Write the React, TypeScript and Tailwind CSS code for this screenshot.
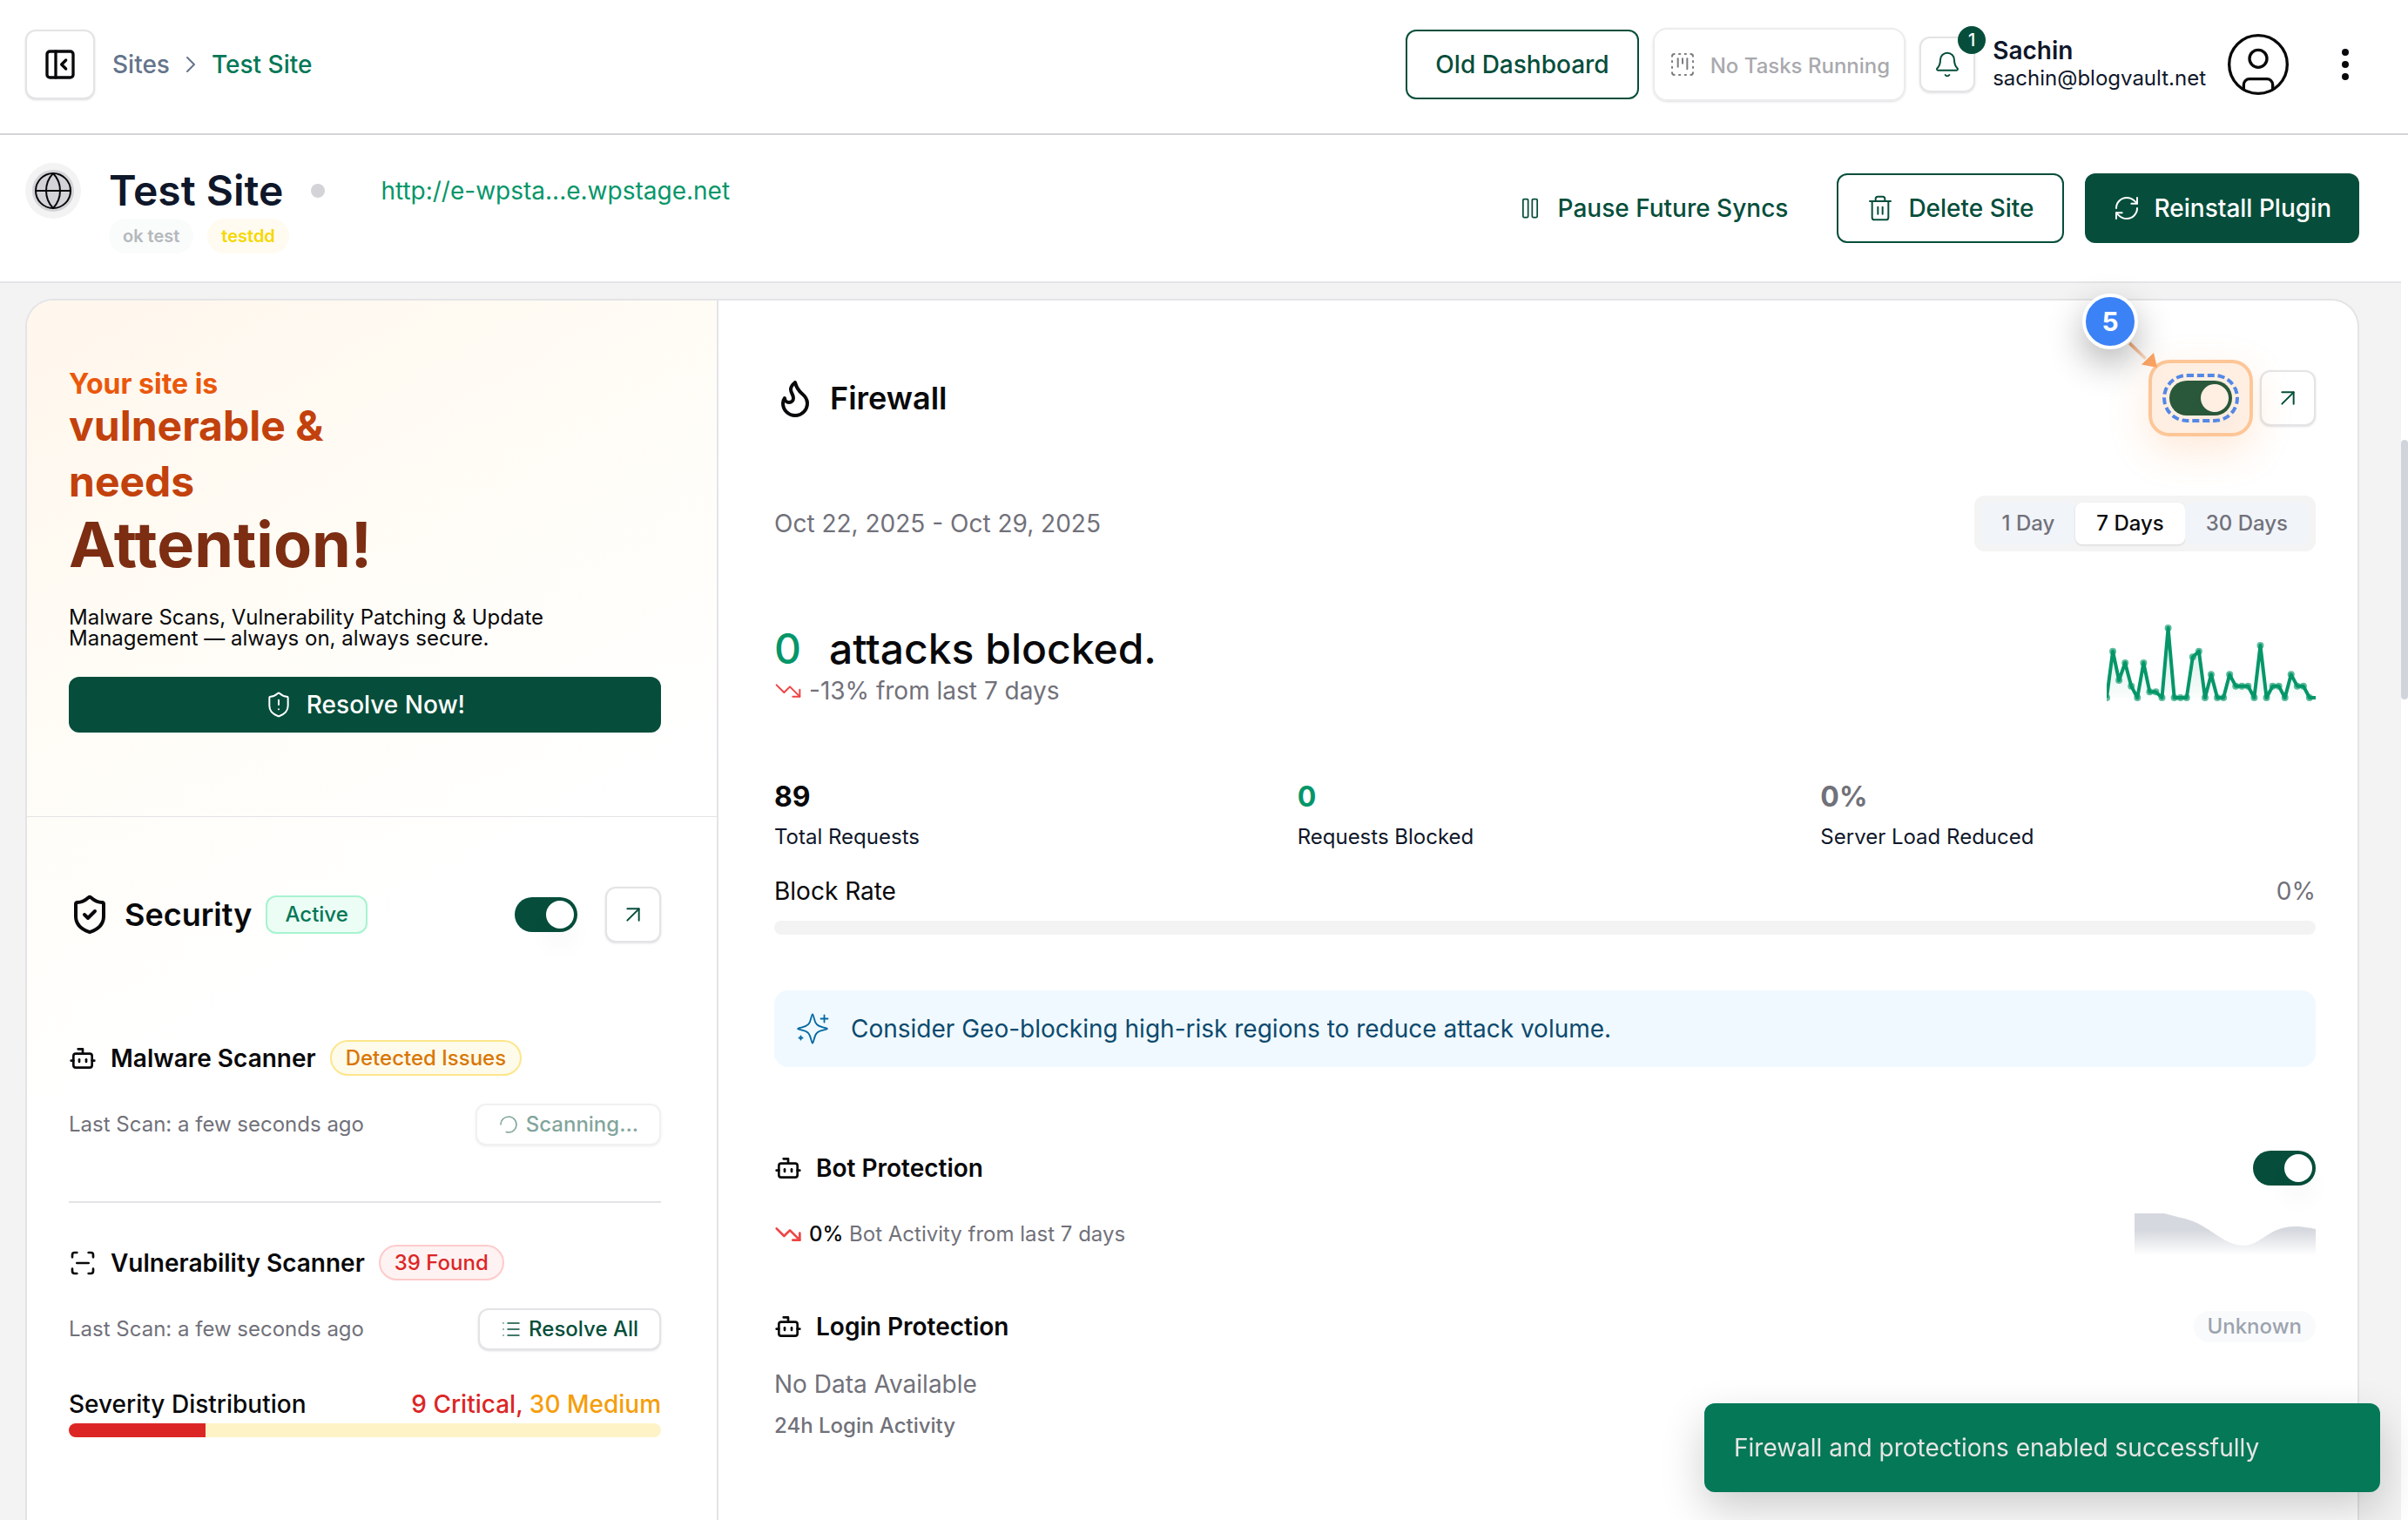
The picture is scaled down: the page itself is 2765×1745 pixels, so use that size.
import React, { useState } from 'react';
import {
  ArrowUpRight,
  Bell,
  Bot,
  ChevronRight,
  CircleUser,
  EllipsisVertical,
  Flame,
  Globe,
  List,
  LoaderCircle,
  PanelLeftClose,
  Pause,
  RefreshCw,
  ScanLine,
  ShieldAlert,
  ShieldCheck,
  SquareDashedKanban,
  Trash2,
  TrendingDown,
} from 'lucide-react';
import clsx from 'clsx';

const ATTACKS = [
  0, 8, 3, 6, 2, 0, 6, 1, 1, 0, 12, 0, 0, 0, 7, 8, 0, 4, 0, 0, 4, 2, 2, 2, 0, 9, 0, 2, 2, 0, 4, 2, 2, 0, 0,
];

const RANGES = ['1 Day', '7 Days', '30 Days'];

const STATS = [
  { value: '89', label: 'Total Requests', color: 'text-zinc-950' },
  { value: '0', label: 'Requests Blocked', color: 'text-[#059669]' },
  { value: '0%', label: 'Server Load Reduced', color: 'text-[#71717a]' },
];

interface SwitchProps {
  label: string;
}

const Switch: React.FC<SwitchProps> = ({ label }) => {
  const [on, setOn] = useState(true);

  return (
    <button
      type="button"
      role="switch"
      aria-checked={on}
      aria-label={label}
      onClick={() => setOn(!on)}
      className={clsx('flex h-10 w-[72px] shrink-0 rounded-full p-1', on ? 'justify-end bg-[#064e3b]' : 'justify-start bg-zinc-300')}
    >
      <span className="h-8 w-8 rounded-full bg-white shadow-[0_20px_30px_-6px_rgba(0,0,0,0.1)]" />
    </button>
  );
};

const OpenButton: React.FC<{ label: string }> = ({ label }) => (
  <button
    type="button"
    aria-label={label}
    className="flex h-16 w-16 shrink-0 items-center justify-center rounded-xl border-2 border-[#e4e4e7] bg-white text-[#064e3b] shadow-sm"
  >
    <ArrowUpRight size={32} strokeWidth={1.5} />
  </button>
);

interface PillProps {
  className: string;
  children: React.ReactNode;
}

const Pill: React.FC<PillProps> = ({ className, children }) => (
  <span className={clsx('flex items-center rounded-full px-4 text-2xl leading-8 font-medium whitespace-nowrap', className)}>
    {children}
  </span>
);

const TopBar = () => (
  <header className="flex h-[155px] shrink-0 items-center justify-between border-b-2 border-[#d4d4d8] pr-8 pb-[5px] pl-[29px]">
    <div className="flex items-center">
      <button
        type="button"
        aria-label="Collapse sidebar"
        className="flex h-20 w-20 items-center justify-center rounded-xl border-2 border-[#e4e4e7] bg-white text-zinc-950 shadow-sm"
      >
        <PanelLeftClose size={40} />
      </button>
      <nav aria-label="Breadcrumb" className="ml-5 flex items-center gap-2 font-medium">
        <a href="#sites" className="text-[#64748b]">
          Sites
        </a>
        <ChevronRight size={32} strokeWidth={1.5} className="text-[#64748b]" />
        <a href="#test-site" className="text-[#047857]">
          Test Site
        </a>
      </nav>
    </div>

    <div className="flex items-center gap-4">
      <button type="button" className="h-20 rounded-xl border-2 border-[#064e3b] px-8 font-medium text-[#064e3b]">
        Old Dashboard
      </button>
      <button
        type="button"
        disabled
        className="flex h-[84px] items-center gap-4 rounded-2xl border-2 border-[#ececee] px-4 text-2xl font-medium text-[#a9a9ae] shadow-sm"
      >
        <SquareDashedKanban size={32} strokeWidth={1.5} className="text-[#7c7c80]" />
        <span className="pt-1">No Tasks Running</span>
      </button>
      <button
        type="button"
        aria-label="Notifications"
        className="relative flex h-16 w-16 items-center justify-center rounded-xl border-2 border-[#e4e4e7] text-[#064e3b] shadow-sm"
      >
        <Bell size={32} strokeWidth={1.5} />
        <span className="absolute -top-[14px] -right-[14px] flex h-8 w-8 items-center justify-center rounded-full bg-[#064e3b] text-xl font-medium text-white">
          1
        </span>
      </button>
      <div className="ml-1 flex flex-col leading-8 text-[#0f172a]">
        <span className="font-semibold">Sachin</span>
        <span className="text-2xl">sachin@blogvault.net</span>
      </div>
      <CircleUser size={80} strokeWidth={1} className="ml-1 text-zinc-950" />
      <button type="button" aria-label="More" className="ml-1 flex h-20 w-20 items-center justify-center text-zinc-950">
        <EllipsisVertical size={48} />
      </button>
    </div>
  </header>
);

const SiteBar = () => (
  <section className="flex h-[170px] shrink-0 items-center justify-between border-b-2 border-[#e4e4e7] bg-white pr-12 pl-[29px]">
    <div className="flex items-start">
      <div className="flex h-16 w-16 items-center justify-center rounded-full bg-[#f3f3f3]">
        <span className="flex h-12 w-12 items-center justify-center rounded-full bg-[#d4d4d8]">
          <Globe size={48} strokeWidth={1} className="text-zinc-950" />
        </span>
      </div>
      <div className="ml-8 flex flex-col">
        <div className="flex h-16 items-center">
          <h1 className="text-5xl font-semibold text-[#0f172a]">Test Site</h1>
          <span className="ml-8 h-4 w-4 rounded-full bg-[#d4d4d8]" />
          <a href="#open-site" className="ml-16 text-[#059669]">
            http://e-wpsta...e.wpstage.net
          </a>
        </div>
        <div className="flex gap-4 text-xl font-semibold">
          <span className="flex h-10 items-center rounded-full bg-[#fafbfb] px-4 text-[#b4b8bc]">ok test</span>
          <span className="flex h-10 items-center rounded-full bg-[#fffbf1] px-4 text-[#f5d800]">testdd</span>
        </div>
      </div>
    </div>

    <div className="flex items-center gap-6 font-medium">
      <button type="button" className="flex h-20 items-center gap-[18px] px-8 text-[#064e3b]">
        <Pause size={28} strokeWidth={1.5} />
        Pause Future Syncs
      </button>
      <button type="button" className="flex h-20 items-center gap-4 rounded-xl border-2 border-[#064e3b] px-8 text-[#064e3b]">
        <Trash2 size={32} strokeWidth={1.5} />
        Delete Site
      </button>
      <button type="button" className="flex h-20 items-center gap-4 rounded-xl bg-[#064e3b] px-8 text-white">
        <RefreshCw size={32} strokeWidth={1.5} />
        Reinstall Plugin
      </button>
    </div>
  </section>
);

const AttentionPanel = () => (
  <section className="border-b border-[#e4e4e7] pt-20 pr-16 pb-24 pl-12">
    <h2 className="flex flex-col font-bold">
      <span className="text-[32px] leading-8 text-[#ea580c]">Your site is</span>
      <span className="w-[340px] text-5xl leading-[64px] text-[#c2410c]">vulnerable &amp; needs</span>
      <span className="text-7xl leading-[80px] text-[#7c2d12]">Attention!</span>
    </h2>
    <p className="mt-8 w-[560px] text-2xl leading-6 text-zinc-950">
      Malware Scans, Vulnerability Patching &amp; Update Management — always on, always secure.
    </p>
    <button
      type="button"
      className="mt-8 flex h-16 w-full items-center justify-center gap-4 rounded-xl bg-[#064e3b] font-medium text-white"
    >
      <ShieldAlert size={32} strokeWidth={1.5} />
      Resolve Now!
    </button>
  </section>
);

const SecurityPanel = () => (
  <section className="flex flex-col pt-20 pr-16 pl-12">
    <div className="flex items-center justify-between">
      <div className="flex items-center gap-4">
        <ShieldCheck size={48} />
        <h2 className="text-4xl font-semibold">Security</h2>
        <span className="flex h-11 items-center rounded-xl border-2 border-[#a7f3d0] bg-[#ecfdf5] px-5 text-2xl font-medium text-[#047857]">
          Active
        </span>
      </div>
      <div className="flex items-center gap-8">
        <Switch label="Security" />
        <OpenButton label="Open security" />
      </div>
    </div>

    <div className="mt-28 flex items-center gap-4">
      <Bot size={32} />
      <h3 className="font-semibold">Malware Scanner</h3>
      <Pill className="h-[41px] border-2 border-[#fde68a] bg-[#fffbeb] text-[#d97706]">Detected Issues</Pill>
    </div>
    <div className="mt-8 flex items-center justify-between text-2xl">
      <span className="text-[#71717a]">Last Scan: a few seconds ago</span>
      <button
        type="button"
        disabled
        className="flex h-12 items-center gap-2 rounded-xl border-2 border-[#e4e4e7] bg-white px-6 font-medium text-[#064e3b] opacity-50 shadow-sm"
      >
        <LoaderCircle size={24} strokeWidth={1.5} className="rotate-180" />
        Scanning...
      </button>
    </div>

    <hr className="mt-16 border-t-2 border-[#e4e4e7]" />

    <div className="mt-12 flex items-center gap-4">
      <ScanLine size={32} />
      <h3 className="font-semibold">Vulnerability Scanner</h3>
      <Pill className="h-[41px] border-2 border-[#fecaca] bg-[#fef2f2] text-[#dc2626]">39 Found</Pill>
    </div>
    <div className="mt-8 flex items-center justify-between text-2xl">
      <span className="text-[#71717a]">Last Scan: a few seconds ago</span>
      <button
        type="button"
        className="flex h-12 items-center gap-2 rounded-xl border-2 border-[#e4e4e7] bg-white px-6 font-medium text-[#064e3b] shadow-sm"
      >
        <List size={24} strokeWidth={1.5} />
        Resolve All
      </button>
    </div>

    <div className="mt-10 flex items-center justify-between leading-[44px] font-medium">
      <span>Severity Distribution</span>
      <span className="text-[#f59e0b]">
        <span className="text-[#dc2626]">9 Critical,</span> 30 Medium
      </span>
    </div>
    <div className="h-4 overflow-hidden rounded-full bg-[#fef3c7]">
      <div className="h-full bg-[#dc2626]" style={{ width: `${(9 / 39) * 100}%` }} />
    </div>
  </section>
);

const AttackChart = () => {
  const points = ATTACKS.map((value, i) => ({ x: (i * 240) / (ATTACKS.length - 1), y: 88 - (value * 20) / 3 }));
  const line = points.map((p) => `${p.x},${p.y}`).join(' ');

  return (
    <svg width="240" height="96" viewBox="0 0 240 96" aria-hidden="true">
      <defs>
        <linearGradient id="attack-fill" x1="0" y1="0" x2="0" y2="1">
          <stop offset="0" stopColor="#059669" stopOpacity="0.2" />
          <stop offset="1" stopColor="#059669" stopOpacity="0.02" />
        </linearGradient>
      </defs>
      <polygon points={`0,88 ${line} 240,88`} fill="url(#attack-fill)" />
      <polyline points={line} fill="none" stroke="#059669" strokeWidth="4" strokeLinejoin="round" />
      {points.slice(0, -1).map((p) => (
        <circle key={p.x} cx={p.x} cy={p.y} r="4" fill="#059669" fillOpacity="0.65" />
      ))}
    </svg>
  );
};

const BotChart = () => (
  <svg width="208" height="48" viewBox="0 0 208 48" aria-hidden="true">
    <defs>
      <linearGradient id="bot-fill" x1="0" y1="0" x2="0" y2="1">
        <stop offset="0.4" stopColor="#d5d8de" />
        <stop offset="1" stopColor="#d5d8de" stopOpacity="0" />
      </linearGradient>
    </defs>
    <path
      d="M0 0H34C44 3 56 5 67 9C88 17 104 37 125 37C145 37 154 15 184 15C194 15 202 17 208 18V48H0Z"
      fill="url(#bot-fill)"
    />
  </svg>
);

// Numbered walkthrough marker that sits on top of the firewall switch
const StepMarker = () => (
  <div className="pointer-events-none absolute -inset-6">
    <div className="absolute inset-0 rounded-3xl border-4 border-[#fb923c]/45 bg-[#fb923c]/15 shadow-[0_16px_48px_rgba(251,146,60,0.2)]" />
    <div className="absolute inset-4 rounded-full border-4 border-dashed border-[#5487e6]" />
    <svg width="40" height="40" viewBox="0 0 40 40" className="absolute -top-6 -left-7">
      <defs>
        <linearGradient id="arrow-line" x1="0" y1="0" x2="1" y2="1">
          <stop offset="0" stopColor="#f0a46c" />
          <stop offset="1" stopColor="#fbe0cc" />
        </linearGradient>
      </defs>
      <path d="M7.500 3.500L26 21.500L23.500 24L5 6.500Z" fill="url(#arrow-line)" />
      <path d="M34 16L38 33L20 29.500Z" fill="#fba564" />
    </svg>
    <div className="absolute -top-[76px] -left-[76px] flex h-16 w-16 items-center justify-center rounded-full border-4 border-white bg-[#3b82f6] text-3xl font-bold text-white shadow-[0_16px_40px_rgba(0,0,0,0.3)]">
      5
    </div>
  </div>
);

const SparkleIcon = () => (
  <svg
    width="40"
    height="40"
    viewBox="0 0 40 40"
    fill="none"
    stroke="#0369a1"
    strokeWidth="1.8"
    strokeLinecap="round"
    strokeLinejoin="round"
    aria-hidden="true"
  >
    <path d="M20 3.500C20.600 3.500 21 5 21.600 7.500C23.200 14.500 25 16.800 32 18.400C35 19.100 37 19.500 37 20C37 20.500 35 20.900 32 21.600C25 23.200 23.200 25.500 21.600 32.500C21 35 20.600 36.500 20 36.500C19.400 36.500 19 35 18.400 32.500C16.800 25.500 15 23.200 8 21.600C5 20.900 3 20.500 3 20C3 19.500 5 19.100 8 18.400C15 16.800 16.800 14.500 18.400 7.500C19 5 19.400 3.500 20 3.500Z" />
    <path d="M33.500 4.500V12.500M29.500 8.500H37.500M6.500 28.500V32.500M4.500 30.500H8.500" />
  </svg>
);

const FirewallPanel = () => {
  const [range, setRange] = useState('7 Days');

  return (
    <section className="flex min-w-0 flex-1 flex-col pt-20 pr-12 pl-16">
      <div className="flex items-center justify-between">
        <div className="flex items-center gap-4">
          <Flame size={48} />
          <h2 className="text-4xl font-semibold">Firewall</h2>
        </div>
        <div className="flex items-center gap-8">
          <div className="relative">
            <Switch label="Firewall" />
            <StepMarker />
          </div>
          <OpenButton label="Open firewall" />
        </div>
      </div>

      <div className="mt-20 flex items-center justify-between">
        <span className="text-[#71717a]">Oct 22, 2025 - Oct 29, 2025</span>
        <div role="tablist" className="flex rounded-xl bg-[#f4f4f5] p-2">
          {RANGES.map((item) => (
            <button
              key={item}
              type="button"
              role="tab"
              aria-selected={range === item}
              onClick={() => setRange(item)}
              className={clsx(
                'h-12 rounded-lg px-6 text-2xl font-medium',
                range === item ? 'bg-white text-zinc-950 shadow-sm' : 'bg-[#f1f4f9] text-[#71717a]',
              )}
            >
              {item}
            </button>
          ))}
        </div>
      </div>

      <div className="mt-20 flex items-center justify-between">
        <div>
          <p className="flex gap-8 text-5xl leading-[64px] font-medium">
            <span className="text-[#059669]">0</span>
            <span>attacks blocked.</span>
          </p>
          <p className="flex items-center gap-2 leading-8 text-[#71717a]">
            <TrendingDown size={32} strokeWidth={1.5} className="text-[#ef4444]" />
            -13% from last 7 days
          </p>
        </div>
        <AttackChart />
      </div>

      <dl className="mt-20 grid grid-cols-3 gap-8">
        {STATS.map((stat) => (
          <div key={stat.label} className="flex flex-col-reverse gap-1">
            <dt className="text-2xl leading-8 text-[#0f172a]">{stat.label}</dt>
            <dd className={clsx('text-[32px] leading-[52px] font-bold', stat.color)}>{stat.value}</dd>
          </div>
        ))}
      </dl>

      <div className="mt-6 flex items-center justify-between leading-[44px]">
        <span>Block Rate</span>
        <span className="text-[#71717a]">0%</span>
      </div>
      <div className="mt-3 h-4 rounded-full bg-[#f3f3f3]" />

      <div className="mt-16 flex h-[88px] items-center gap-6 rounded-2xl bg-[#f0f9ff] px-6 text-[#0c4a6e]">
        <SparkleIcon />
        Consider Geo-blocking high-risk regions to reduce attack volume.
      </div>

      <div className="mt-24 flex items-center justify-between">
        <div className="flex items-center gap-4">
          <Bot size={32} />
          <h3 className="font-semibold">Bot Protection</h3>
        </div>
        <Switch label="Bot Protection" />
      </div>
      <div className="mt-8 flex items-center justify-between">
        <p className="flex items-center gap-2 text-2xl text-[#71717a]">
          <TrendingDown size={32} className="text-[#ef4444]" />
          <span>
            <span className="font-medium text-zinc-950">0%</span> Bot Activity from last 7 days
          </span>
        </p>
        <BotChart />
      </div>

      <div className="mt-16 flex items-center justify-between">
        <div className="flex items-center gap-4">
          <Bot size={32} />
          <h3 className="leading-9 font-semibold">Login Protection</h3>
        </div>
        <Pill className="h-9 bg-[#f9fafb] text-[#9ca3af]">Unknown</Pill>
      </div>
      <p className="mt-6 leading-[48px] text-[#71717a]">No Data Available</p>
      <p className="text-2xl leading-[48px] font-medium text-[#71717a]">24h Login Activity</p>
    </section>
  );
};

export default function App() {
  return (
    <div className="flex h-screen flex-col overflow-hidden bg-white font-['Inter',sans-serif] text-[28px] leading-10 text-zinc-950">
      <TopBar />
      <div className="flex min-h-0 flex-1">
        <main className="flex min-w-0 flex-1 flex-col overflow-hidden bg-[#f3f3f3]">
          <SiteBar />
          <div className="flex min-h-0 flex-1 pt-[18px] pr-12 pl-[29px]">
            <div className="flex min-w-0 flex-1 rounded-t-[32px] border-2 border-b-0 border-[#e4e4e7] bg-white">
              <div className="w-[794px] shrink-0 rounded-tl-[30px] border-r-2 border-[#e4e4e7] bg-[linear-gradient(150deg,#fff6ec_0px,#fffcf5_400px,#ffffff_850px)]">
                <AttentionPanel />
                <SecurityPanel />
              </div>
              <FirewallPanel />
            </div>
          </div>
        </main>
        <div aria-hidden="true" className="w-2 shrink-0">
          <div className="mt-[350px] h-[298px] rounded-full bg-[#d1d5db]" />
        </div>
      </div>
      <div
        role="status"
        className="fixed right-8 bottom-8 flex h-[102px] w-[776px] items-center rounded-xl bg-[#047857] px-[34px] text-[#e7e5e4] shadow-[0_20px_50px_rgba(0,0,0,0.2)]"
      >
        Firewall and protections enabled successfully
      </div>
    </div>
  );
}
